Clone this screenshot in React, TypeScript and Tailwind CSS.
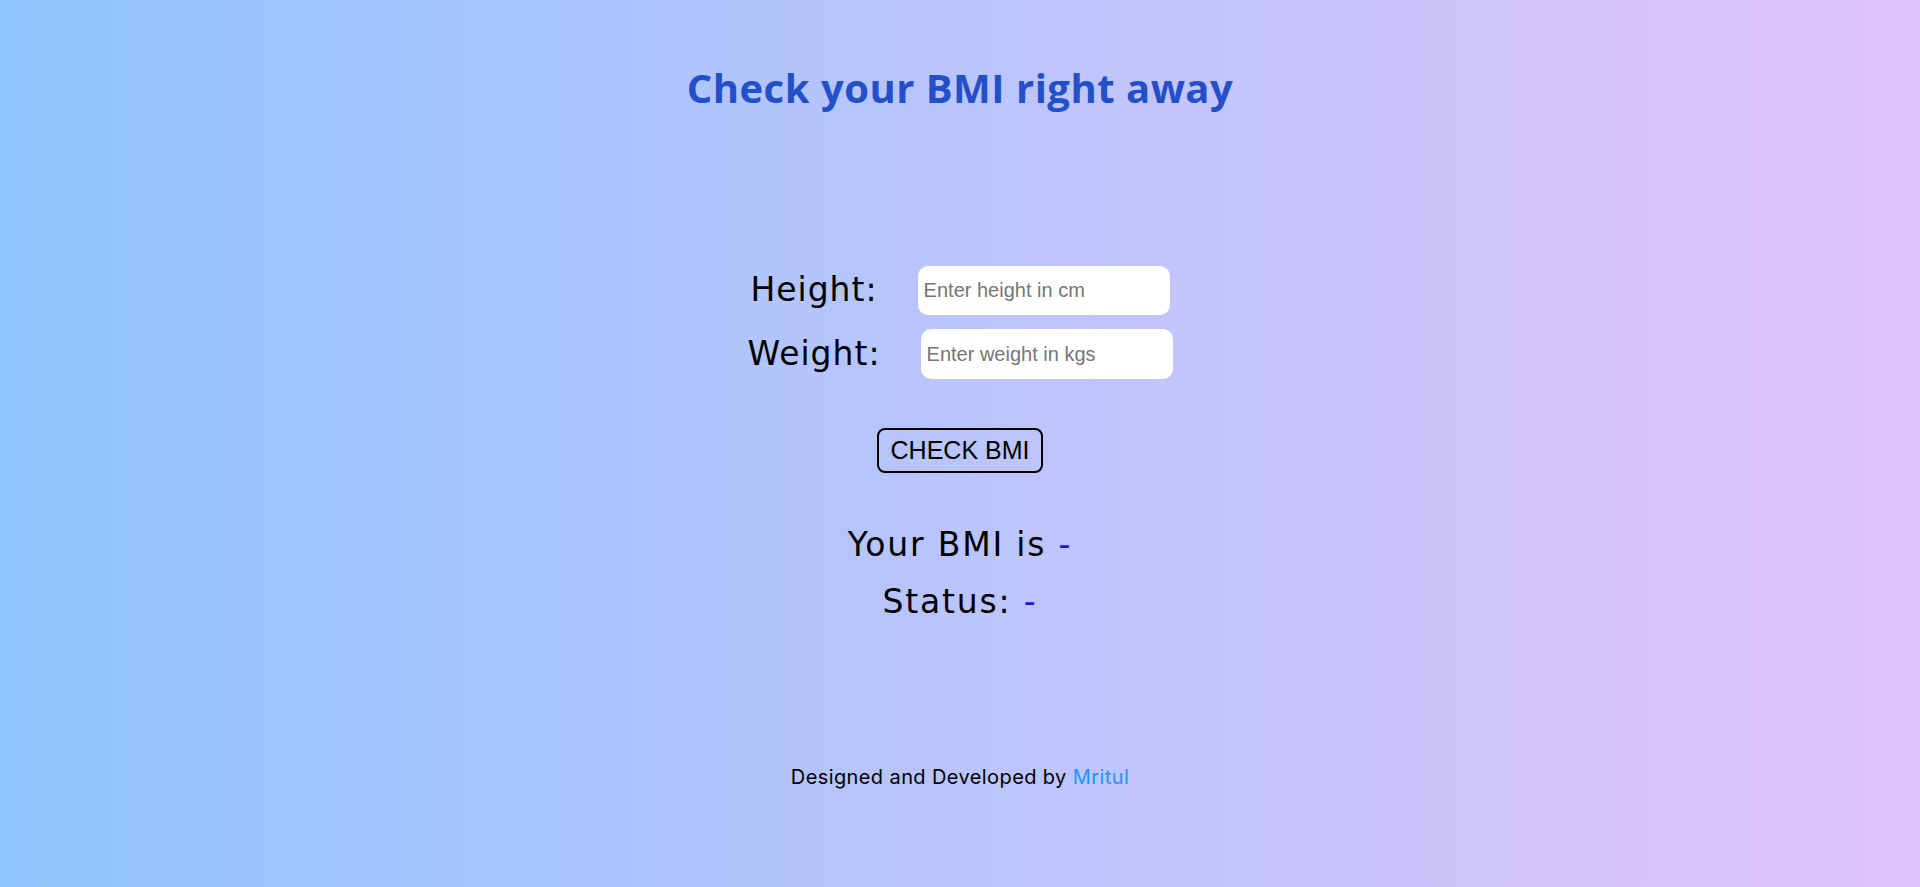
export default function App() {
  return (
    <div className="min-h-[887px] w-full flex flex-col items-center bg-gradient-to-r from-[#8ec5fc] to-[#e0c3fc] font-['DejaVu_Sans',sans-serif]">
      {/* Title */}
      <h1 className="mt-[62px] text-[40px] leading-[52px] font-bold text-[#2350c8] tracking-[0.5px] font-['Open_Sans',sans-serif]">
        Check your BMI right away
      </h1>

      {/* Form */}
      <div className="mt-[151px] flex flex-col items-center gap-[14px]">
        <div className="flex items-center gap-[40px]">
          <label className="text-[33px] leading-[50px] tracking-[1px] text-black">Height:</label>
          <input
            type="text"
            placeholder="Enter height in cm"
            className="w-[252px] h-[49px] rounded-[10px] bg-white px-[6px] text-[20px] font-['Liberation_Sans',Arial,sans-serif] placeholder:text-[#757575] outline-none"
          />
        </div>
        <div className="flex items-center gap-[40px]">
          <label className="text-[33px] leading-[50px] tracking-[1px] text-black">Weight:</label>
          <input
            type="text"
            placeholder="Enter weight in kgs"
            className="w-[252px] h-[50px] rounded-[10px] bg-white px-[6px] text-[20px] font-['Liberation_Sans',Arial,sans-serif] placeholder:text-[#757575] outline-none"
          />
        </div>
      </div>

      <button className="mt-[49px] w-[166px] h-[45px] border-2 border-black rounded-[8px] bg-transparent text-[25px] text-black font-['Liberation_Sans',Arial,sans-serif]">
        CHECK BMI
      </button>

      {/* Result */}
      <div className="mt-[43px] flex flex-col items-center text-[33px] leading-[57px] tracking-[1.8px] text-black">
        <p>
          Your BMI is <span className="text-[#2314cf]">-</span>
        </p>
        <p>
          Status: <span className="text-[#2314cf]">-</span>
        </p>
      </div>

      {/* Footer */}
      <p className="mt-[132px] text-[20px] tracking-[0.4px] text-black font-['Inter',sans-serif]">
        Designed and Developed by <span className="text-[#2196f3]">Mritul</span>
      </p>
    </div>
  );
}
